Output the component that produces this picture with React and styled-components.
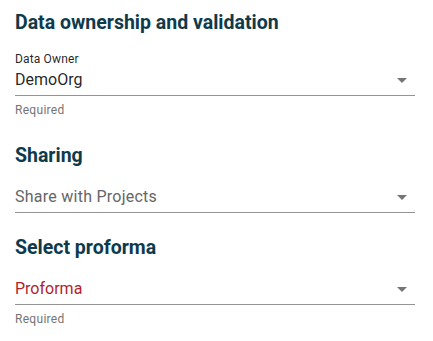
import React from "react";
import styled, { createGlobalStyle } from "styled-components";

const Global = createGlobalStyle`
  html, body { margin: 0; padding: 0; background: #fff; }
  body { font-family: Roboto, "Noto Sans", sans-serif; }
`;

const Page = styled.div`
  width: 433px;
  padding: 11px 18px 0 15px;
  box-sizing: border-box;
  display: flex;
  flex-direction: column;
`;

const Section = styled.section`
  display: flex;
  flex-direction: column;
  margin-bottom: ${(p) => p.$mb || 0}px;
`;

const Heading = styled.h2`
  margin: 0;
  font-family: Roboto, sans-serif;
  font-weight: 700;
  font-size: 19.5px;
  line-height: 24px;
  color: #0e3a4b;
`;

const Field = styled.div`
  display: flex;
  flex-direction: column;
  margin-top: ${(p) => p.$mt}px;
`;

const Label = styled.div`
  font-size: 12px;
  line-height: 14px;
  letter-spacing: 0.15px;
  color: rgba(0, 0, 0, 0.87);
`;

const Control = styled.div`
  display: flex;
  align-items: center;
  justify-content: space-between;
  height: 20px;
  padding: 4px 0 5px;
  border-bottom: 1px solid #949494;
`;

const Value = styled.div`
  font-size: 16px;
  line-height: 20px;
  letter-spacing: ${(p) => (p.$placeholder ? "0.25px" : "0")};
  color: ${(p) => p.$color};
`;

const Arrow = styled.svg`
  flex: none;
  width: 24px;
  height: 24px;
  margin: -2px 1px -2px 0;
  fill: rgba(0, 0, 0, 0.54);
`;

const Helper = styled.div`
  margin-top: 7px;
  font-size: 12px;
  line-height: 14px;
  color: #757575;
  letter-spacing: 0.3px;
`;

const Drop = () => (
  <Arrow viewBox="0 0 24 24">
    <path d="M7 10l5 5 5-5z" />
  </Arrow>
);

export default function App() {
  return (
    <>
      <Global />
      <Page>
        <Section $mb={27}>
          <Heading>Data ownership and validation</Heading>
          <Field $mt={17}>
            <Label>Data Owner</Label>
            <Control>
              <Value $color="rgba(0,0,0,0.87)">DemoOrg</Value>
              <Drop />
            </Control>
            <Helper>Required</Helper>
          </Field>
        </Section>
        <Section $mb={23}>
          <Heading>Sharing</Heading>
          <Field $mt={15}>
            <Control>
              <Value $placeholder $color="#666">Share with Projects</Value>
              <Drop />
            </Control>
          </Field>
        </Section>
        <Section>
          <Heading>Select proforma</Heading>
          <Field $mt={15}>
            <Control>
              <Value $color="#b01f2e">Proforma</Value>
              <Drop />
            </Control>
            <Helper>Required</Helper>
          </Field>
        </Section>
      </Page>
    </>
  );
}
